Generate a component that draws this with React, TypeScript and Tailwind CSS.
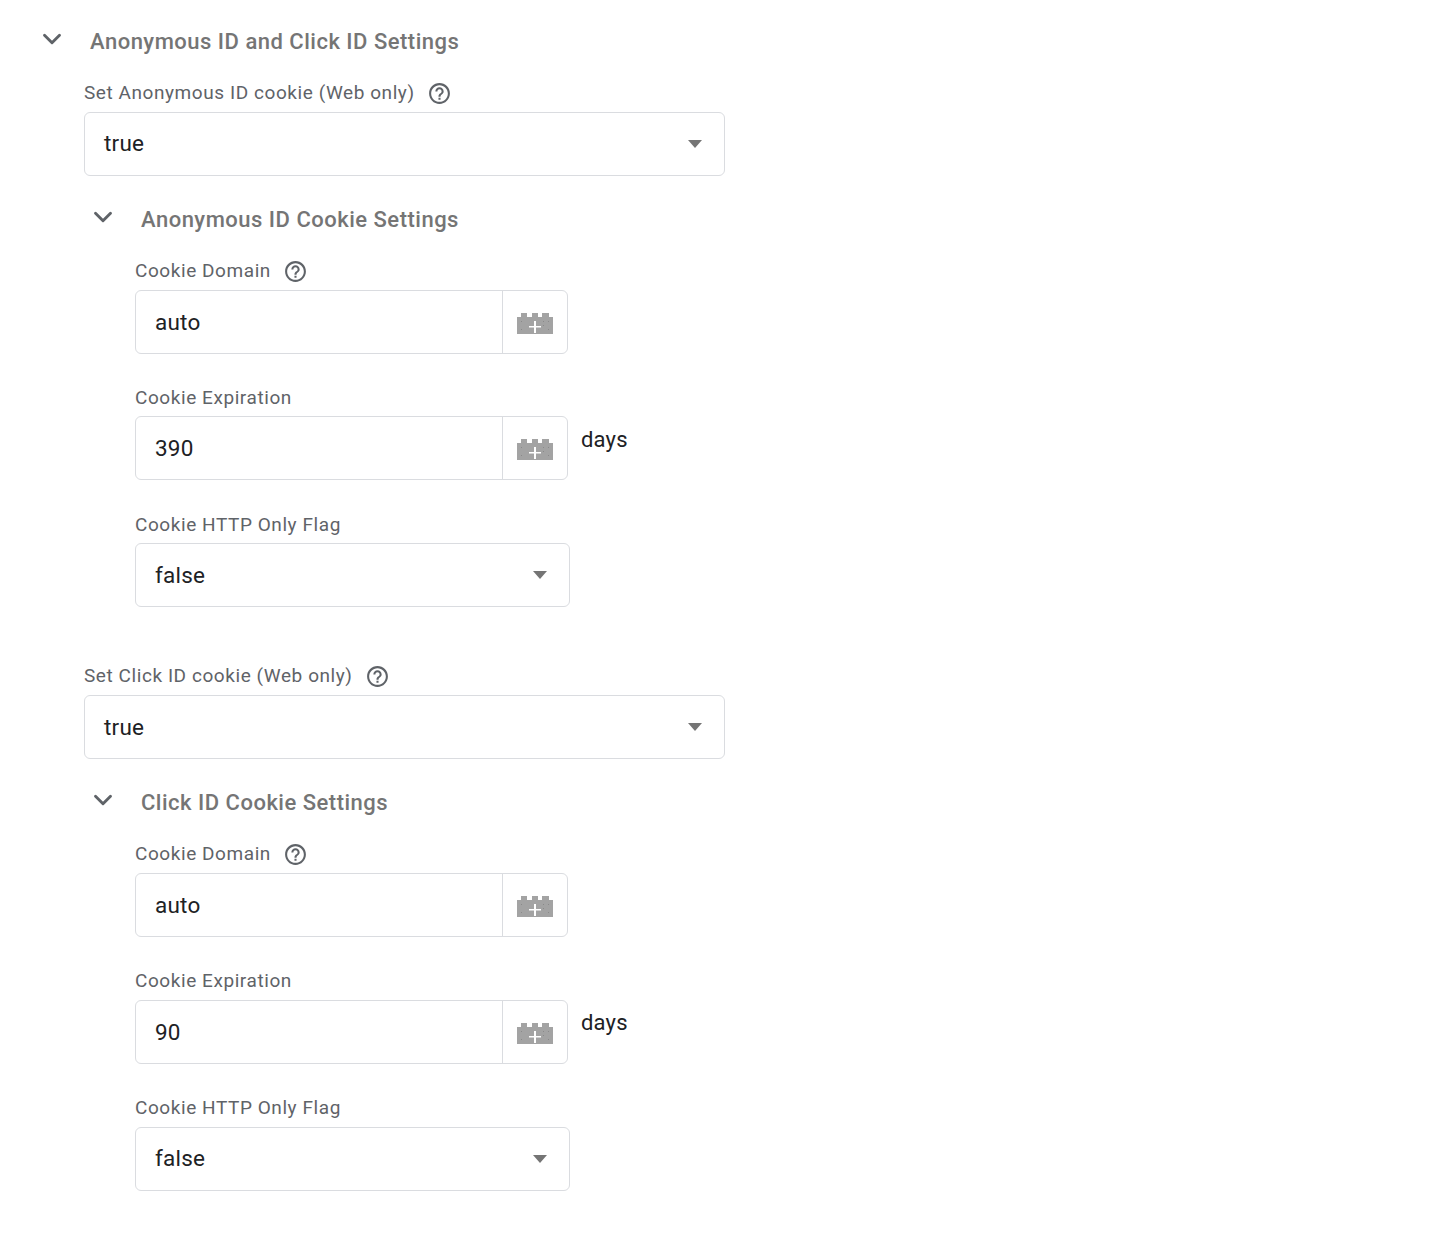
import { ChevronDown } from "lucide-react";
import type { ReactNode } from "react";

function HelpIcon() {
  return (
    <svg viewBox="0 0 24 24" className="size-[25px] shrink-0 fill-[#5f6368]">
      <path d="M12 2C6.48 2 2 6.48 2 12s4.48 10 10 10 10-4.48 10-10S17.52 2 12 2zm0 18c-4.41 0-8-3.59-8-8s3.59-8 8-8 8 3.59 8 8-3.59 8-8 8zm-1-4h2v2h-2v-2zm1-10c-2.21 0-4 1.79-4 4h2c0-1.1.9-2 2-2s2 .9 2 2c0 2-3 1.75-3 5h2c0-2.25 3-2.5 3-5 0-2.21-1.79-4-4-4z" />
    </svg>
  );
}

function BrickIcon() {
  return (
    <svg viewBox="0 0 36 21" className="mt-[3px] h-[21px] w-9">
      <path fill="#a3a3a3" d="M0 4h4V0h6v4h5V0h6v4h4V0h7v4h4v17H0z" />
      <path fill="#8a8a8a" d="M4 8h1v1H4zM31 8h1v1h-1zM4 16h1v1H4zM31 16h1v1h-1zM26 8h1v1h-1zM26 12h1v1h-1z" />
      <path fill="#fff" d="M17 8h2v5h5v1.5h-5V20h-2v-5.5h-5V13h5z" />
    </svg>
  );
}

function SectionHeader({ title, className }: { title: string; className: string }) {
  return (
    <div className={`flex h-10 items-center ${className}`}>
      <ChevronDown className="-mt-[4px] size-[30px] shrink-0 text-[#5f6368]" strokeWidth={2.3} />
      <span className="ml-[23px] text-[22px] font-medium tracking-[0.5px] text-[#757575]">{title}</span>
    </div>
  );
}

function Label({ text, help, className }: { text: string; help?: boolean; className?: string }) {
  return (
    <div className={`flex h-6 items-center gap-3 pt-[2px] text-[19px] tracking-[0.57px] text-[#5f6368] ${className ?? ""}`}>
      <span>{text}</span>
      {help && <HelpIcon />}
    </div>
  );
}

function SelectBox({ value, width, raised }: { value: string; width: string; raised?: boolean }) {
  return (
    <div className={`flex h-16 items-center justify-between rounded-md border border-[#dadce0] bg-white pl-[19px] pr-[22px] ${width}`}>
      <span className={`${raised ? "" : "pt-[2px]"} text-[22.5px] tracking-[0.2px] text-[#202124]`}>{value}</span>
      <span className="h-0 w-0 border-x-[7.5px] border-t-[8px] border-x-transparent border-t-[#757575]" />
    </div>
  );
}

function TextBox({ value, suffix, raised }: { value: string; suffix?: string; raised?: boolean }) {
  return (
    <div className="flex items-start">
      <div className="flex h-16 w-[433px] items-stretch rounded-md border border-[#dadce0] bg-white">
        <div className="flex flex-1 items-center pl-[19px] pt-[2px] text-[22.5px] tracking-[0.2px] text-[#202124]">{value}</div>
        <div className="flex w-[65px] items-center justify-center border-l border-[#dadce0]">
          <BrickIcon />
        </div>
      </div>
      {suffix && (
        <span className={`ml-[13px] ${raised ? "mt-[6px]" : "mt-[7px]"} text-[22px] tracking-[0.2px] text-[#202124]`}>{suffix}</span>
      )}
    </div>
  );
}

function Group({ children }: { children: ReactNode }) {
  return <div className="ml-[51px]">{children}</div>;
}

function CookieSettings({ title, expiration, lower }: { title: string; expiration: string; lower?: boolean }) {
  return (
    <>
      <div className="mt-[23px] -ml-[3px]">
        <SectionHeader title={title} className="pl-[7px]" />
      </div>
      <Group>
        <Label text="Cookie Domain" help className="mt-[19px] mb-2" />
        <TextBox value="auto" />
        <Label text="Cookie Expiration" className={lower ? "mt-[31px] mb-2" : "mt-[31px] mb-[7px]"} />
        <TextBox value={expiration} suffix="days" raised={lower} />
        <Label text="Cookie HTTP Only Flag" className={lower ? "mt-[31px] mb-2" : "mt-[32px] mb-[7px]"} />
        <SelectBox value="false" width="w-[435px]" raised={lower} />
      </Group>
    </>
  );
}

export default function App() {
  return (
    <div className="min-h-[1240px] bg-white pt-[21px] font-['Roboto',sans-serif]">
      <SectionHeader title="Anonymous ID and Click ID Settings" className="pl-[37px]" />
      <div className="ml-[84px]">
        <Label text="Set Anonymous ID cookie (Web only)" help className="mt-[19px] mb-2" />
        <SelectBox value="true" width="w-[641px]" raised />
        <CookieSettings title="Anonymous ID Cookie Settings" expiration="390" />
        <Label text="Set Click ID cookie (Web only)" help className="mt-[56px] mb-2" />
        <SelectBox value="true" width="w-[641px]" />
        <CookieSettings title="Click ID Cookie Settings" expiration="90" lower />
      </div>
    </div>
  );
}
